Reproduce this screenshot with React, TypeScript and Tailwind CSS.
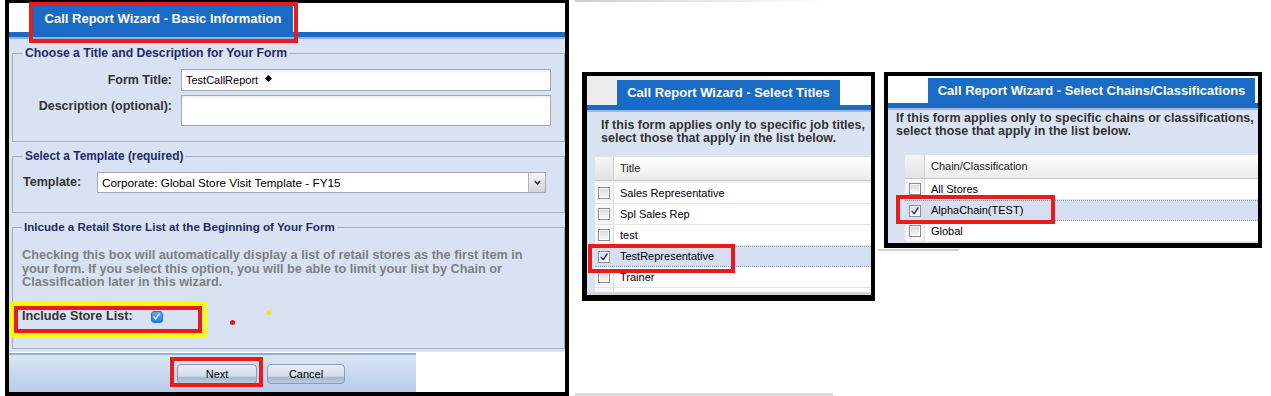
import type { ReactNode } from 'react';

type Row = { label: string; checked?: boolean };

const titleRows: Row[] = [
  { label: 'Sales Representative' },
  { label: 'Spl Sales Rep' },
  { label: 'test' },
  { label: 'TestRepresentative', checked: true },
  { label: 'Trainer' },
  { label: '' },
];

const chainRows: Row[] = [
  { label: 'All Stores' },
  { label: 'AlphaChain(TEST)', checked: true },
  { label: 'Global' },
];

function Check({ className }: { className?: string }) {
  return (
    <svg viewBox="0 0 12 12" className={className} fill="none">
      <path d="M2.6 6.4 L5 9.3 L9.6 2.4" stroke="currentColor" strokeWidth={1.7} strokeLinecap="round" strokeLinejoin="round" />
    </svg>
  );
}

function GrayBox({ checked = false }: { checked?: boolean }) {
  return (
    <span className="flex h-[12px] w-[12px] items-center justify-center border border-[#8e8e8e] bg-linear-to-b from-[#d6d6d6] to-[#fafafa] shadow-[inset_0_0_0_1px_rgba(255,255,255,0.7)]">
      {checked && <Check className="h-[10px] w-[10px] text-[#283a8c]" />}
    </span>
  );
}

function PickList({ heading, rows, boxCol, gap }: { heading: string; rows: Row[]; boxCol: string; gap?: boolean }) {
  return (
    <div className="flex flex-col">
      <div className="flex h-[24px] shrink-0 border-b border-[#c6c6c6] bg-linear-to-b from-white to-[#ebebeb]">
        <div className={`${boxCol} shrink-0 border-r border-[#d2d2d2] bg-linear-to-b from-[#f5f5f5] to-[#e2e2e2]`} />
        <div className="flex items-center pl-[6px] text-[11px] text-[#222]">{heading}</div>
      </div>
      {gap && <div className="h-[2px] shrink-0 bg-[#f2f2f2]" />}
      {rows.map((r, i) => (
        <div
          key={i}
          className={
            r.checked
              ? 'flex h-[21px] shrink-0 border-y border-dotted border-[#8a9fcf] bg-[#d6dff2]'
              : 'flex h-[21px] shrink-0 border-b border-[#e3e3e3] bg-white'
          }
        >
          <div className={`${boxCol} flex shrink-0 items-center justify-center border-r border-[#d8dde8] ${r.checked ? '' : 'bg-[#f6f6f6]'}`}>
            <GrayBox checked={r.checked} />
          </div>
          <div className="flex items-center whitespace-nowrap pl-[6px] text-[11px] text-black">{r.label}</div>
        </div>
      ))}
    </div>
  );
}

function Legend({ children, size }: { children: ReactNode; size: string }) {
  return <legend className={`px-[2px] ${size} leading-[14px] font-bold text-[#1d2b66]`}>{children}</legend>;
}

function WizButton({ label, width }: { label: string; width: string }) {
  return (
    <button
      className={`${width} h-[20px] rounded-[4px] border border-[#8a9cb8] bg-[linear-gradient(#e8eef8_0%,#d3ddec_62%,#a8b7cc_68%,#bccadd_100%)] text-[11px] text-black`}
    >
      {label}
    </button>
  );
}

function BasicInfoPanel() {
  return (
    <div className="relative ml-[5px] flex h-[396px] w-[564px] shrink-0 flex-col border-t-[3px] border-r-4 border-b-4 border-l-4 border-black bg-white">
      <div className="flex h-[29px] shrink-0">
        <div className="ml-[24px] flex w-[260px] items-center justify-center bg-[#1a6bc6] pt-[3px] text-[13px] font-bold text-white">
          Call Report Wizard - Basic Information
        </div>
      </div>
      <div className="h-[5px] shrink-0 bg-[#1a6bc6]" />
      <div className="h-[2px] shrink-0 bg-[#8fb1e3]" />

      <div className="flex shrink-0 flex-col gap-[7px] bg-[#d9e2f3] pt-[7px] pb-[3px] pl-[3px]">
        <fieldset className="h-[96px] border border-[#a8adc0] pr-[12px] pl-[10px]">
          <Legend size="text-[12.2px]">Choose a Title and Description for Your Form</Legend>
          <div className="flex flex-col gap-[4px] pt-[9px]">
            <div className="flex items-center">
              <label className="w-[149px] text-right text-[12.5px] font-bold text-[#333]">Form Title:</label>
              <div className="ml-[9px] flex h-[22px] w-[370px] items-center border border-[#a3a6b6] bg-white pl-[4px] text-[11px] text-black shadow-[inset_0_2px_2px_rgba(0,0,0,0.06)]">
                TestCallReport
                <span className="ml-[8px] mb-[3px] h-[5px] w-[5px] rotate-45 bg-black" />
              </div>
            </div>
            <div className="flex items-start">
              <label className="w-[149px] pt-[4px] text-right text-[12.5px] leading-[15px] font-bold text-[#333]">
                Description (optional):
              </label>
              <div className="ml-[9px] h-[31px] w-[370px] border border-[#a3a6b6] bg-white shadow-[inset_0_2px_2px_rgba(0,0,0,0.06)]" />
            </div>
          </div>
        </fieldset>

        <fieldset className="h-[64px] border border-[#a8adc0] pl-[10px]">
          <Legend size="text-[11.9px]">Select a Template (required)</Legend>
          <div className="flex items-center pt-[9px]">
            <label className="w-[74px] text-[12.5px] font-bold text-[#333]">Template:</label>
            <div className="flex h-[21px] w-[449px] items-center border border-[#a3a6b6] bg-white">
              <span className="flex-1 pl-[4px] text-[11.75px] text-black">Corporate: Global Store Visit Template - FY15</span>
              <span className="flex h-full w-[17px] items-center justify-center border-l border-[#b4b4b4] bg-linear-to-b from-[#f6f6f6] to-[#d5d5d5]">
                <svg viewBox="0 0 10 10" className="h-[9px] w-[9px]" fill="none">
                  <path d="M2 3.5 L5 6.5 L8 3.5" stroke="#23356e" strokeWidth={1.8} />
                </svg>
              </span>
            </div>
          </div>
        </fieldset>

        <fieldset className="h-[129px] border border-[#a8adc0] pl-[9px]">
          <Legend size="text-[11.6px]">Inlcude a Retail Store List at the Beginning of Your Form</Legend>
          <p className="pt-[15px] text-[12.7px] leading-[13.5px] font-bold whitespace-nowrap text-[#7f7f7f]">
            Checking this box will automatically display a list of retail stores as the first item in
            <br />
            your form. If you select this option, you will be able to limit your list by Chain or
            <br />
            Classification later in this wizard.
          </p>
          <div className="mt-[17px] flex h-[20px] items-center">
            <span className="text-[12.7px] font-bold text-[#333]">Include Store List:</span>
            <span className="ml-[18px] flex h-[12px] w-[12px] items-center justify-center rounded-[3px] border border-[#2c6fd8] bg-linear-to-b from-[#61a7fc] to-[#2e7bf0]">
              <Check className="h-[9px] w-[9px] text-white" />
            </span>
          </div>
        </fieldset>
      </div>

      <div className="flex flex-1">
        <div className="flex w-[407px] flex-col">
          <div className="h-px bg-white" />
          <div className="h-[2px] bg-[#8db0e2]" />
          <div className="flex flex-1 items-start gap-[10px] bg-linear-to-b from-[#dbe5f5] to-[#b8cce9] pt-[9px] pl-[168px]">
            <WizButton label="Next" width="w-[80px]" />
            <WizButton label="Cancel" width="w-[78px]" />
          </div>
        </div>
      </div>

      {/* annotations */}
      <div className="absolute top-[-1px] left-[20px] h-[41px] w-[269px] border-4 border-[#ec1b1b]" />
      <div className="absolute top-[299px] left-[1px] h-[35px] w-[197px] border-4 border-[#ffff00]" />
      <div className="absolute top-[303px] left-[5px] h-[27px] w-[188px] border-4 border-[#ec1b1b]" />
      <div className="absolute top-[354px] left-[161px] h-[30px] w-[93px] border-4 border-[#ec1b1b]" />
      <div className="absolute top-[317px] left-[221px] h-[5px] w-[5px] rounded-full bg-[#e8141b]" />
      <div className="absolute top-[307px] left-[257px] h-[5px] w-[5px] rounded-full bg-[#f2e41c]" />
    </div>
  );
}

function TitlesPanel() {
  return (
    <div className="relative mt-[70px] ml-[7px] flex h-[229px] w-[293px] flex-col overflow-hidden border-t-4 border-r-4 border-b-[6px] border-l-[5px] border-black">
      <div className="flex h-[29px] shrink-0 bg-linear-to-r from-[#ececec] to-white pt-[4px]">
        <div className="ml-[30px] flex w-[223px] items-center justify-center bg-[#1a6bc6] pt-[1px] text-[13px] font-bold text-white">
          Call Report Wizard - Select Titles
        </div>
      </div>
      <div className="h-[5px] shrink-0 bg-[#1a6bc6]" />
      <div className="h-[2px] shrink-0 bg-[#9bb7e4]" />
      <div className="flex flex-1 flex-col overflow-hidden bg-[#dbe3f3]">
        <p className="pt-[7px] pl-[14px] text-[12.5px] leading-[13px] font-bold whitespace-nowrap text-[#333]">
          If this form applies only to specific job titles,
          <br />
          select those that apply in the list below.
        </p>
        <div className="mt-[12px] ml-[8px] flex-1 overflow-hidden">
          <PickList heading="Title" rows={titleRows} boxCol="w-[19px]" gap />
        </div>
        <div className="h-[3px] shrink-0 bg-[#d4d4d4]" />
      </div>
      <div className="absolute top-[168px] left-[1px] h-[29px] w-[147px] border-4 border-[#ec1b1b]" />
    </div>
  );
}

function ChainsPanel() {
  return (
    <div className="relative mt-[72px] ml-[9px] flex h-[176px] w-[378px] flex-col overflow-hidden border-4 border-b-[5px] border-black">
      <div className="flex h-[27px] shrink-0 bg-white pt-[2px]">
        <div className="ml-[40px] flex w-[327px] items-center justify-center bg-[#1a6bc6] pt-[1px] text-[13px] font-bold text-white">
          Call Report Wizard - Select Chains/Classifications
        </div>
      </div>
      <div className="h-[5px] shrink-0 bg-[#1a6bc6]" />
      <div className="h-[2px] shrink-0 bg-[#9bb7e4]" />
      <div className="flex flex-1 flex-col overflow-hidden bg-[#dbe3f3]">
        <p className="pt-[2px] pl-[8px] text-[12.5px] leading-[13px] font-bold whitespace-nowrap text-[#333]">
          If this form applies only to specific chains or classifications,
          <br />
          select those that apply in the list below.
        </p>
        <div className="mt-[17px] ml-[17px] flex-1 overflow-hidden">
          <PickList heading="Chain/Classification" rows={chainRows} boxCol="w-[20px]" />
        </div>
      </div>
      <div className="absolute top-[119px] left-[8px] h-[29px] w-[159px] border-4 border-[#ec1b1b]" />
    </div>
  );
}

export default function App() {
  return (
    <div className="flex h-[396px] w-[1271px] items-start overflow-hidden bg-white font-['Liberation_Sans',Arial,sans-serif]">
      <BasicInfoPanel />
      <div className="ml-[6px] flex shrink-0 flex-col">
        <div className="h-[2px] w-[255px] bg-linear-to-r from-[#cfcfcf] to-white" />
        <TitlesPanel />
        <div className="mt-[92px] h-[3px] w-[258px] bg-[#dadada]" />
      </div>
      <div className="flex shrink-0 flex-col">
        <ChainsPanel />
        <div className="mt-px ml-[3px] h-[2px] w-[81px] bg-[#d3d3d3]" />
      </div>
    </div>
  );
}
